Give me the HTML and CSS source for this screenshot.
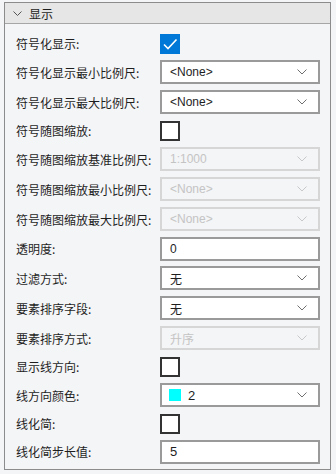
FILE: index.html
```html
<!DOCTYPE html>
<html lang="zh-CN">
<head>
    <meta charset="UTF-8">
    <title>显示属性</title>
    <link rel="stylesheet" href="styles.css">
</head>
<body>
    <div class="panel">
        <div class="group-head">
            <svg class="head-arrow" width="9" height="5" viewBox="0 0 9 5"><path d="M0.5 0.5 L4.5 4.5 L8.5 0.5" fill="none" stroke="#555" stroke-width="1"/></svg>
            <span>显示</span>
        </div>

        <div class="props">
            <div class="row cb-row">
                <span class="label">符号化显示:</span>
                <span class="check on">
                    <svg width="20" height="20" viewBox="0 0 20 20"><path d="M4 10.5 L8 14.5 L16.5 5.5" fill="none" stroke="#fff" stroke-width="1.6"/></svg>
                </span>
            </div>
            <div class="row">
                <span class="label">符号化显示最小比例尺:</span>
                <div class="combo"><span>&lt;None&gt;</span><svg class="arrow" width="10" height="6" viewBox="0 0 10 6"><path d="M0.5 0.5 L5 5 L9.5 0.5"/></svg></div>
            </div>
            <div class="row">
                <span class="label">符号化显示最大比例尺:</span>
                <div class="combo"><span>&lt;None&gt;</span><svg class="arrow" width="10" height="6" viewBox="0 0 10 6"><path d="M0.5 0.5 L5 5 L9.5 0.5"/></svg></div>
            </div>
            <div class="row cb-row">
                <span class="label">符号随图缩放:</span>
                <span class="check"></span>
            </div>
            <div class="row">
                <span class="label">符号随图缩放基准比例尺:</span>
                <div class="combo disabled"><span>1:1000</span><svg class="arrow" width="10" height="6" viewBox="0 0 10 6"><path d="M0.5 0.5 L5 5 L9.5 0.5"/></svg></div>
            </div>
            <div class="row">
                <span class="label">符号随图缩放最小比例尺:</span>
                <div class="combo disabled"><span>&lt;None&gt;</span><svg class="arrow" width="10" height="6" viewBox="0 0 10 6"><path d="M0.5 0.5 L5 5 L9.5 0.5"/></svg></div>
            </div>
            <div class="row">
                <span class="label">符号随图缩放最大比例尺:</span>
                <div class="combo disabled"><span>&lt;None&gt;</span><svg class="arrow" width="10" height="6" viewBox="0 0 10 6"><path d="M0.5 0.5 L5 5 L9.5 0.5"/></svg></div>
            </div>
            <div class="row text-row">
                <span class="label">透明度:</span>
                <div class="combo edit"><span>0</span></div>
            </div>
            <div class="row">
                <span class="label">过滤方式:</span>
                <div class="combo"><span>无</span><svg class="arrow" width="10" height="6" viewBox="0 0 10 6"><path d="M0.5 0.5 L5 5 L9.5 0.5"/></svg></div>
            </div>
            <div class="row">
                <span class="label">要素排序字段:</span>
                <div class="combo"><span>无</span><svg class="arrow" width="10" height="6" viewBox="0 0 10 6"><path d="M0.5 0.5 L5 5 L9.5 0.5"/></svg></div>
            </div>
            <div class="row">
                <span class="label">要素排序方式:</span>
                <div class="combo disabled"><span>升序</span><svg class="arrow" width="10" height="6" viewBox="0 0 10 6"><path d="M0.5 0.5 L5 5 L9.5 0.5"/></svg></div>
            </div>
            <div class="row cb-row">
                <span class="label">显示线方向:</span>
                <span class="check"></span>
            </div>
            <div class="row">
                <span class="label">线方向颜色:</span>
                <div class="combo"><span class="swatch"></span><span class="num">2</span><svg class="arrow" width="10" height="6" viewBox="0 0 10 6"><path d="M0.5 0.5 L5 5 L9.5 0.5"/></svg></div>
            </div>
            <div class="row cb-row">
                <span class="label">线化简:</span>
                <span class="check"></span>
            </div>
            <div class="row text-row">
                <span class="label">线化简步长值:</span>
                <div class="combo edit"><span class="num">5</span></div>
            </div>
        </div>
    </div>
</body>
</html>
```

FILE: styles.css
```css
body {
    margin: 0;
    background: #f4f5f7;
    font-family: "Liberation Sans", "Noto Sans CJK SC", sans-serif;
    font-size: 12px;
    color: #1e1e1e;
}
.panel {
    width: 325px;
    height: 466px;
    margin: 2px 0 0 4px;
    border: 1px solid #8c8c8c;
    background: #f4f5f7;
}
.group-head {
    height: 20px;
    display: flex;
    align-items: center;
    padding-left: 8px;
    background: #e6e6e6;
    border-bottom: 1px solid #a6a6a6;
}
.group-head span {
    margin-left: 7px;
    font-family: "Noto Sans CJK SC", sans-serif;
}
.head-arrow {
    display: block;
}
.props {
    padding: 6px 0 0 11px;
}
.row {
    height: 30px;
    display: grid;
    grid-template-columns: 144px 160px;
    align-items: center;
}
.cb-row {
    height: 27px;
}
.text-row {
    height: 29px;
}
.label {
    font-family: "Noto Sans CJK SC", sans-serif;
    white-space: nowrap;
}
.check {
    width: 16px;
    height: 16px;
    border: 2px solid #333;
    background: #fff;
    position: relative;
}
.check.on {
    border-color: #0078d7;
    background: #0078d7;
}
.check svg {
    position: absolute;
    left: -2px;
    top: -2px;
}
.combo {
    height: 20px;
    border: 2px solid #9a9a9a;
    background: #fff;
    display: flex;
    align-items: center;
    padding-left: 8px;
    position: relative;
}
.combo.disabled {
    border-color: #d6d6d6;
    background: #f4f5f7;
    color: #c4c4c4;
}
.combo .num {
    font-size: 13px;
}
.swatch {
    width: 12px;
    height: 12px;
    background: #00ffff;
    margin: 0 7px 0 -1px;
}
.arrow {
    position: absolute;
    right: 11px;
    top: 7px;
}
.arrow path {
    fill: none;
    stroke: #707070;
    stroke-width: 1;
}
.combo.disabled .arrow path {
    stroke: #c8c8c8;
}
```
